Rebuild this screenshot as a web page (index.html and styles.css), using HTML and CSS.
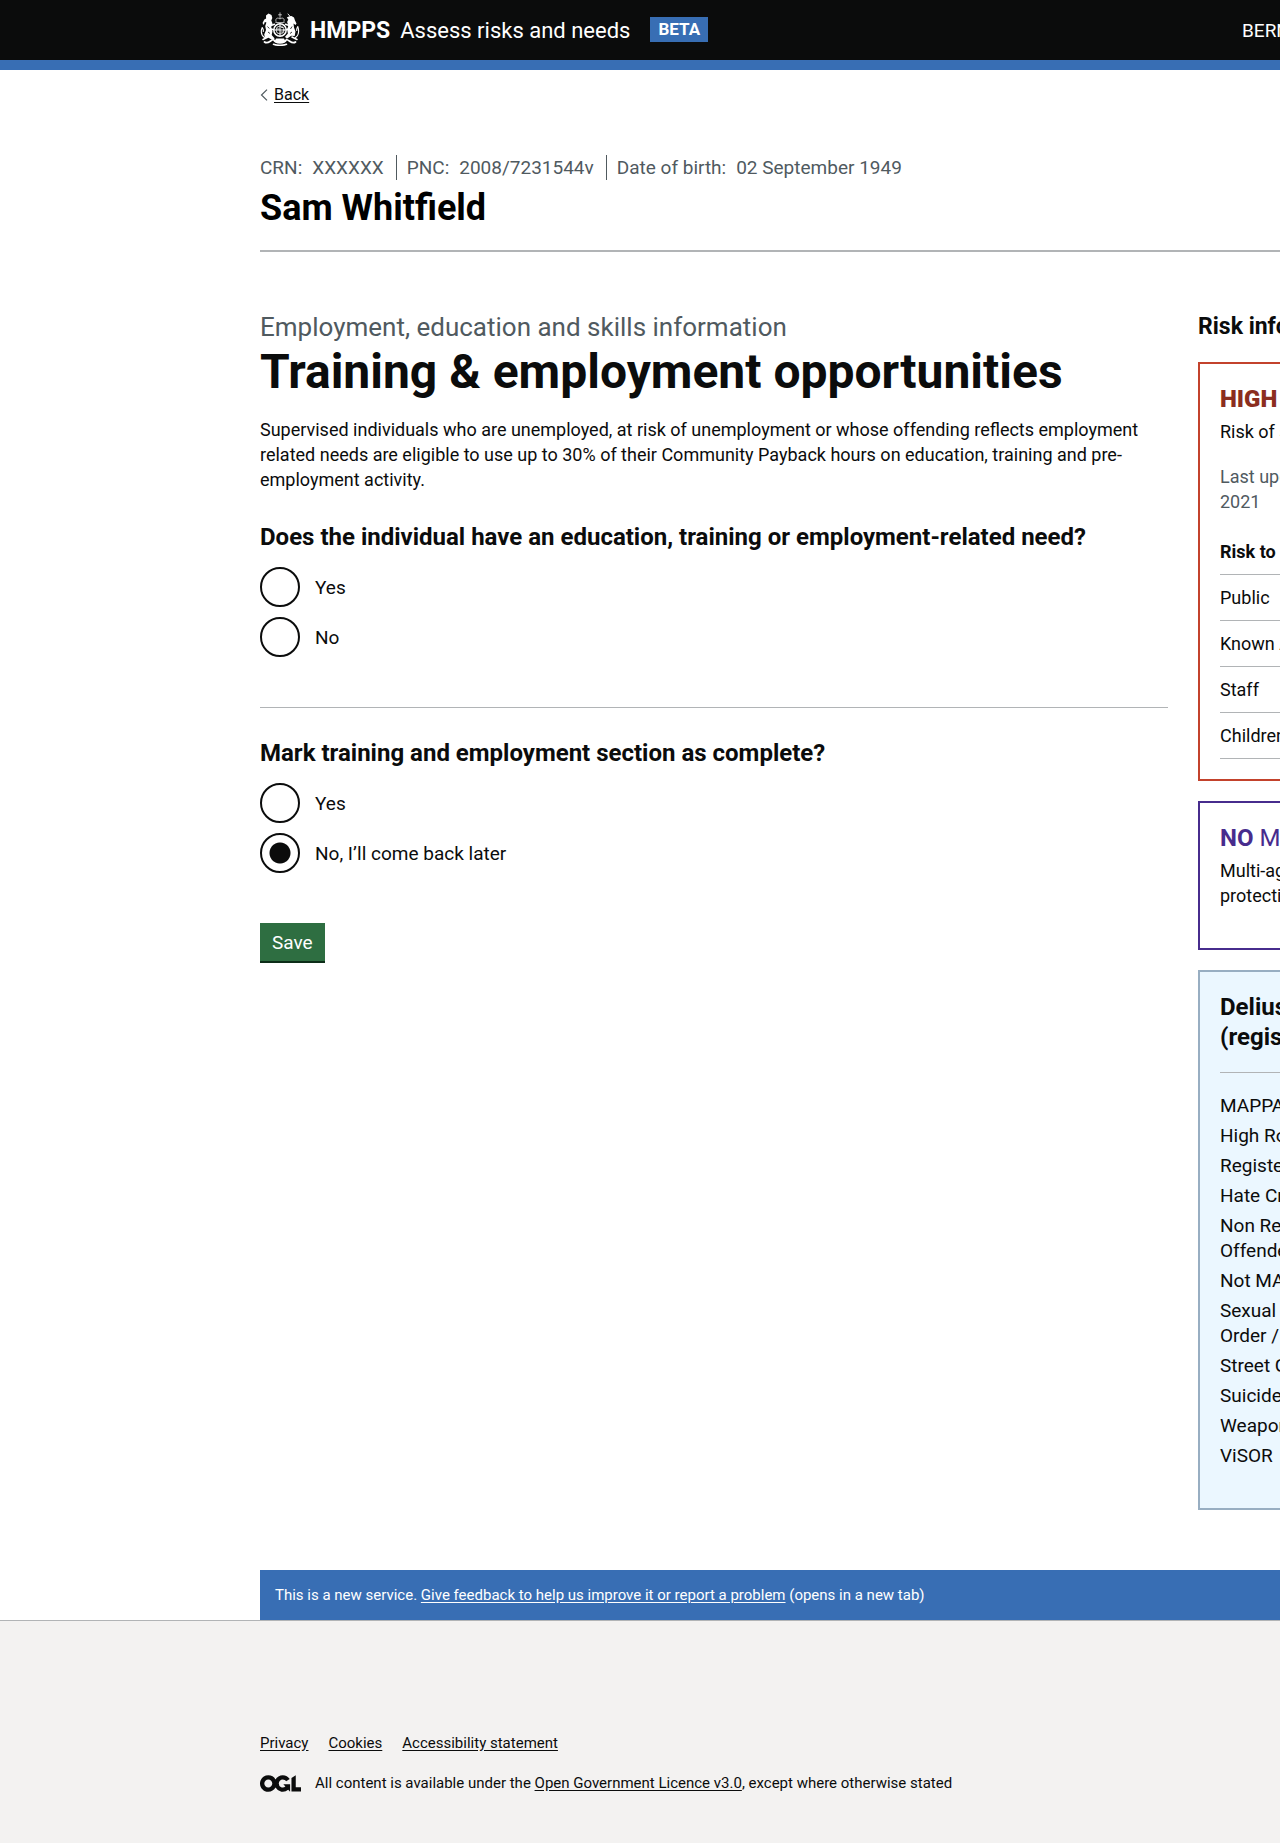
FILE: index.html
```html
<!DOCTYPE html>
<html lang="en">
<head>
<meta charset="utf-8">
<title>Training &amp; employment opportunities - Assess risks and needs</title>
<link rel="stylesheet" href="styles.css">
</head>
<body>
<div class="viewport">
<div class="page">
  <header class="header">
    <div class="container header-inner">
      <div class="brand">
        <svg class="crest" viewBox="0 0 40 34" aria-hidden="true">
          <g fill="none" stroke="#fff" stroke-linecap="round" stroke-linejoin="round">
            <circle cx="20" cy="18" r="6.2" stroke-width="1.5"/>
            <circle cx="20" cy="18" r="3.9" stroke-width=".8"/>
            <path d="M20 12v12M14.500 18h11" stroke-width="1"/>
            <path d="M17 17h2M21 20h2.500M21.500 15.500h1.500" stroke-width=".8"/>
            <path d="M16 9.500c-1-3 1.500-4.500 4-2.500 2.500-2 5-.5 4 2.500M15.800 10.500h8.400M20 .8v5.500M18.500 2.800h3" stroke-width=".9" stroke-opacity=".75"/>
            <path d="M4.500 25.500C1 23 .8 19 2.200 15.500c.8 1.500 1.500 2 1 4" stroke-width="1.100"/>
            <path d="M35.500 25.500C39 23 39.200 19 37.800 14.500c-.8 1.500-1.500 2.500-1 4" stroke-width="1.100"/>
            <path d="M28 2l3.500 4" stroke-width=".9"/>
            <path d="M11 13.500l3.500-1.200M10.500 17l3 .5M29 13.500l-3.500-1.200M29.500 17l-3 .5" stroke-width="1.500"/>
            <path d="M3 27.500l5-2.500M37 27.500l-5-2.500" stroke-width="1.600"/>
            <path d="M4.500 30c3.500 2.500 5.500-1.500 9-2.500 2 4.500 11 4.500 13 0 3.500 1 5.500 5 9 2.500" stroke-width="1.800"/>
            <path d="M13.500 32.200c4 1.400 9 1.400 13 0" stroke-width="1.600"/>
          </g>
          <g fill="#fff">
            <path d="M6 3.500l2.500-2 3 1.500.8 3-1 2.500 1.200 3-1.300 3.500 1.300 4-.8 4 3 3.500-2.500 1.500-4-2.500-3.200.5-.8-3.500 1.800-4.500-.8-4 1.200-3.500-1.600-.5-1 3-1.300-2 1.800-3.500 1.800-1z"/>
            <path d="M31.500 4l2.500 1.500 1 3 1.500 3-1 1.500-2-1.500.5 4 1.500 4-.8 4.500-3.500-.3-4 2.800-2.300-1.500 3-3.500-.8-4 1.300-4-1.300-3.500 1.200-2.500-1.500-2 2-1z"/>
            <path d="M16 26.500h8l1.500 3c-3 1.800-8 1.800-11 0z"/>
          </g>
          <path d="M7.500 14.500l1.800 2M8 20l2 1.500M32 14.500l-1.500 2.500M32 20l-2 1.500" fill="none" stroke="#0b0c0c" stroke-width=".8"/>
        </svg>
        <span class="brand-org">HMPPS</span>
        <a class="brand-service" href="#">Assess risks and needs</a>
        <strong class="phase-tag">BETA</strong>
      </div>
      <div class="user">BERNARD</div>
    </div>
  </header>

  <div class="container">
    <a class="back-link" href="#">
      <svg viewBox="0 0 7 12" aria-hidden="true"><path d="M6.500 .6L1 6l5.500 5.400" fill="none" stroke="#505a5f" stroke-width="1.200"/></svg>
      <span>Back</span>
    </a>

    <section class="person">
      <ul class="person-facts">
        <li><span>CRN:</span><span>XXXXXX</span></li>
        <li><span>PNC:</span><span>2008/7231544v</span></li>
        <li><span>Date of birth:</span><span>02 September 1949</span></li>
      </ul>
      <h2 class="person-name">Sam Whitfield</h2>
    </section>

    <div class="columns">
      <main class="content">
        <span class="caption">Employment, education and skills information</span>
        <h1 class="title">Training &amp; employment opportunities</h1>
        <p class="lead">Supervised individuals who are unemployed, at risk of unemployment or whose offending reflects employment related needs are eligible to use up to 30% of their Community Payback hours on education, training and pre-employment activity.</p>

        <form>
          <fieldset class="question">
            <legend>Does the individual have an education, training or employment-related need?</legend>
            <div class="radios">
              <div class="radio"><input type="radio" name="need" id="need-yes"><label for="need-yes">Yes</label></div>
              <div class="radio"><input type="radio" name="need" id="need-no"><label for="need-no">No</label></div>
            </div>
          </fieldset>
          <hr class="rule">
          <fieldset class="question">
            <legend>Mark training and employment section as complete?</legend>
            <div class="radios">
              <div class="radio"><input type="radio" name="complete" id="complete-yes"><label for="complete-yes">Yes</label></div>
              <div class="radio"><input type="radio" name="complete" id="complete-no" checked><label for="complete-no">No, I’ll come back later</label></div>
            </div>
          </fieldset>
          <button class="button" type="submit">Save</button>
        </form>
      </main>

      <aside class="sidebar">
        <h2 class="sidebar-title">Risk information</h2>

        <section class="widget widget-high">
          <h3 class="widget-title"><strong>HIGH</strong></h3>
          <p class="widget-text">Risk of serious harm</p>
          <p class="widget-text hint">Last updated:<br>2021</p>
          <table class="risk-table">
            <thead><tr><th scope="col">Risk to</th></tr></thead>
            <tbody>
              <tr><td>Public</td></tr>
              <tr><td>Known Adult</td></tr>
              <tr><td>Staff</td></tr>
              <tr><td>Children</td></tr>
            </tbody>
          </table>
        </section>

        <section class="widget widget-mappa">
          <h3 class="widget-title"><strong>NO</strong> MAPPA</h3>
          <p class="widget-text">Multi-agency public<br>protection</p>
        </section>

        <section class="widget widget-flags">
          <h3 class="widget-title">Delius<br>(registers)</h3>
          <ul class="flags">
            <li>MAPPA</li>
            <li>High RoSH</li>
            <li>Registered</li>
            <li>Hate Crime</li>
            <li>Non Registered<br>Offender</li>
            <li>Not MAPPA</li>
            <li>Sexual Harm<br>Order / Notice</li>
            <li>Street Gangs</li>
            <li>Suicide</li>
            <li>Weapons</li>
            <li>ViSOR</li>
          </ul>
        </section>
      </aside>
    </div>

    <div class="feedback">This is a new service. <a href="#">Give feedback to help us improve it or report a problem</a> (opens in a new tab)</div>
  </div>

  <footer class="footer">
    <div class="container">
      <ul class="footer-links">
        <li><a href="#">Privacy</a></li>
        <li><a href="#">Cookies</a></li>
        <li><a href="#">Accessibility statement</a></li>
      </ul>
      <div class="licence">
        <svg class="ogl" viewBox="0 0 483.200 195.700" aria-hidden="true"><path fill="#0b0c0c" d="M421.500 142.800V.1l-50.700 32.300v161.100h112.400v-50.700zm-122.300-9.600A47.120 47.120 0 0 1 221 97.800c0-26 21.100-47.100 47.100-47.100 16.700 0 31.400 8.700 39.700 21.800l42.700-27.200A97.630 97.630 0 0 0 268.100 0c-36.500 0-68.300 20.100-85.100 49.700A98 98 0 0 0 97.800 0C43.900 0 0 43.900 0 97.800s43.900 97.800 97.800 97.800c36.500 0 68.300-20.100 85.100-49.700a97.760 97.760 0 0 0 149.600 25.400l19.400 22.200h3v-87.800h-80l24.300 27.500zM97.800 145c-26 0-47.100-21.100-47.100-47.100s21.100-47.100 47.100-47.100 47.100 21.100 47.100 47.100S123.800 145 97.800 145"/></svg>
        <span>All content is available under the <a href="#">Open Government Licence v3.0</a>, except where otherwise stated</span>
      </div>
    </div>
  </footer>
</div>
</div>
</body>
</html>
```
FILE: styles.css
```css
*, *::before, *::after { box-sizing: border-box; }

body {
  margin: 0;
  background: #fff;
  color: #0b0c0c;
  font-family: Roboto, "Liberation Sans", sans-serif;
  font-size: 19px;
  line-height: 25px;
}

h1, h2, h3, p, ul { margin: 0; padding: 0; }
ul { list-style: none; }
a { color: inherit; text-underline-offset: 2px; }

.viewport { overflow-x: hidden; }
.page { min-width: 1740px; }
.container { max-width: 1220px; margin: 0 auto; }

/* Header */
.header { background: #0b0c0c; color: #fff; border-bottom: 10px solid #386eb4; }
.header-inner { display: flex; align-items: center; justify-content: space-between; height: 60px; }
.brand { display: flex; align-items: center; padding-top: 2px; font-size: 22px; line-height: 30px; }
.crest { width: 40px; height: 34px; margin: 0 10px 4px 0; }
.brand-org { font-size: 23px; font-weight: 700; margin-right: 10px; }
.brand-service { text-decoration: none; margin-right: 20px; }
.phase-tag { margin-bottom: 4px; background: #386eb4; padding: 0 8px; font-size: 17px; line-height: 25px; }
.user { flex: 0 0 238px; }

.back-link { display: inline-flex; align-items: center; gap: 6px; margin-top: 15px; font-size: 16px; line-height: 20px; text-decoration: none; vertical-align: top; }
.back-link svg { width: 8px; height: 12px; }
.back-link span { text-decoration: underline; text-underline-offset: 2px; }

/* Person banner */
.person { margin-top: 50px; padding-bottom: 22px; border-bottom: 2px solid #b1b4b6; }
.person-facts { display: flex; color: #505a5f; }
.person-facts li { display: flex; gap: 10px; padding-right: 12px; margin-right: 10px; border-right: 1px solid #505a5f; }
.person-facts li:last-child { border: 0; margin: 0; padding: 0; }
.person-name { margin-top: 8px; color: #000; font-size: 36px; line-height: 40px; }

/* Two-column body */
.columns { display: grid; grid-template-columns: minmax(0, 908fr) minmax(0, 282fr); gap: 30px; margin-top: 60px; align-items: start; }
.caption { display: block; margin-bottom: 5px; color: #505a5f; font-size: 26px; line-height: 30px; }
.title { font-size: 48px; line-height: 50px; margin-bottom: 20px; }
.lead { font-size: 18px; margin-bottom: 30px; }

.question { margin: 0; padding: 0; border: 0; min-width: 0; }
.question legend { padding: 0; margin-bottom: 15px; font-size: 24px; font-weight: 700; line-height: 30px; }
.radios { display: grid; gap: 10px; }
.radio { display: flex; align-items: center; gap: 15px; }
.radio input {
  appearance: none;
  width: 40px;
  height: 40px;
  margin: 0;
  border: 2px solid #0b0c0c;
  border-radius: 50%;
  background: #fff;
}
.radio input:checked { background: radial-gradient(circle, #0b0c0c 10px, #fff 11px); }
.rule { height: 1px; margin: 50px 0 30px; border: 0; background: #b1b4b6; }

.button {
  display: block;
  margin: 50px 0 0;
  padding: 7px 12px 5px;
  border: 0;
  background: #2e6e41;
  box-shadow: 0 2px 0 #0c2d18;
  color: #fff;
  font-family: inherit;
  font-size: 19px;
  line-height: 26px;
}

/* Sidebar */
.sidebar { display: grid; gap: 20px; }
.sidebar-title { font-size: 23px; line-height: 30px; }
.widget { padding: 20px; border: 2px solid; }
.widget-high { border-color: #c3422c; }
.widget-mappa { border-color: #472c8d; }
.widget-flags { border-color: #98aec2; background: #ebf7ff; }
.widget-title { font-size: 24px; font-weight: 700; line-height: 30px; }
.widget-high .widget-title { color: #8b2e20; }
.widget-mappa .widget-title { color: #472c8d; font-weight: 400; }
.widget-title + .widget-text { margin-top: 5px; margin-bottom: 20px; }
.widget-text { font-size: 18px; }
.hint { color: #505a5f; margin-bottom: 15px; }
.risk-table { width: 100%; border-collapse: separate; border-spacing: 0; text-align: left; }
.risk-table th, .risk-table td { padding: 10px 0; border-bottom: 1px solid #b1b4b6; font-size: 18px; }
.flags { display: grid; gap: 5px; margin: 20px 0; padding-top: 20px; border-top: 1px solid #b1b4b6; }

/* Feedback banner and footer */
.feedback { margin-top: 60px; padding: 15px; background: #386eb4; color: #fff; font-size: 15px; line-height: 20px; }
.footer { padding: 112px 0 50px; border-top: 1px solid #b1b4b6; background: #f3f2f1; font-size: 15px; line-height: 20px; }
.footer-links { display: flex; gap: 20px; margin-bottom: 20px; }
.licence { display: flex; align-items: center; gap: 14px; }
.ogl { width: 41px; height: 17px; }
```
